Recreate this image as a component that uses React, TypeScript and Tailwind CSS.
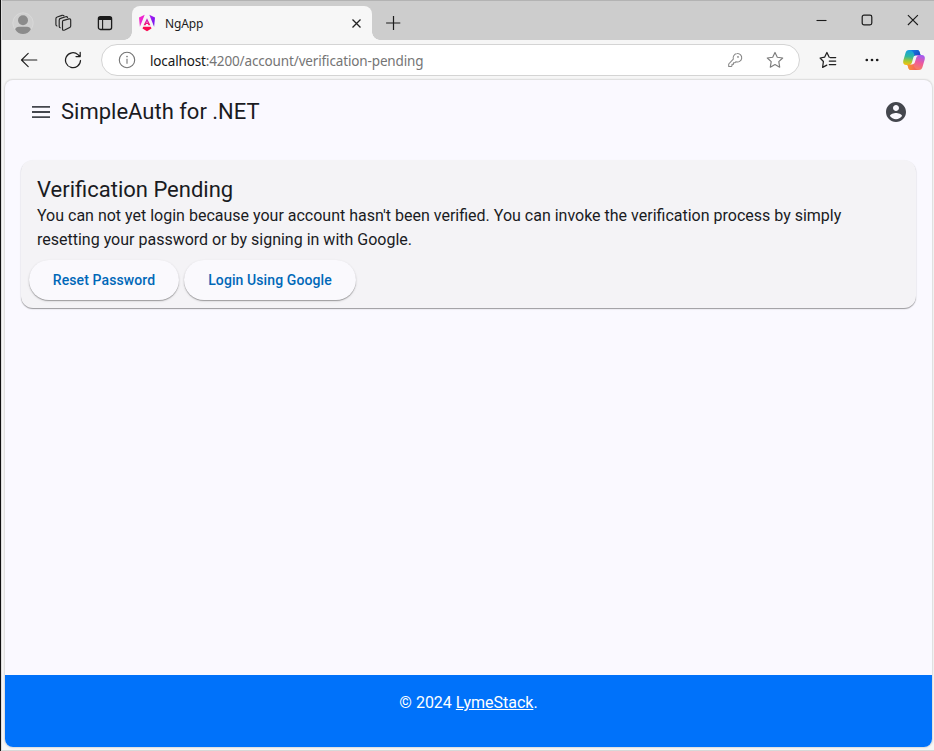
import React from "react";

function ProfileIcon() {
  return (
    <svg width="22" height="22" viewBox="0 0 22 22" className="ml-[10px] mt-3">
      <circle cx="11" cy="11" r="10.2" fill="#d0d0d0" stroke="#dadada" strokeWidth="0.8" />
      <circle cx="11" cy="8.3" r="5" fill="#8b8b8b" />
      <path d="M3.2 17.6C3.6 15.7 5 14.8 7 14.8h8c2 0 3.400.9 3.800 2.800C17 20.800 14 22 11 22s-6-1.200-7.800-4.400z" fill="#8b8b8b" />
    </svg>
  );
}

function WorkspacesIcon() {
  return (
    <svg width="18" height="18" viewBox="0 0 18 18" className="ml-[20px] mt-[14px]" fill="none" stroke="#262626" strokeWidth="1.150" strokeLinejoin="round" strokeLinecap="round">
      <path d="M8.900 6.600 14.900 4.900q1.800-.4 1.800 1.300v5.800q0 1.100-1 1.500l-5 2.500q-2.200.9-2.200-1.100V7.900q0-1 .4-1.300z" />
      <path d="M6.300 13.700Q5.200 13.700 5.200 12.300V6.300q0-1.500 1.400-1.900l5-1.600q1.500-.4 2 .6" />
      <path d="M2.900 12Q1.900 11.700 1.900 10.500V4.800q0-1.400 1.300-1.800L8 1.400q1.400-.4 2 .4" />
    </svg>
  );
}

function TabActionsIcon() {
  return (
    <svg width="16" height="16" viewBox="0 0 16 16" className="ml-[25px] mt-[15px]" fill="none" stroke="#1b1b1b" strokeWidth="1.300">
      <rect x="1.400" y="1.700" width="13.200" height="12.800" rx="2" />
      <path d="M1.400 3.500h13.200" strokeWidth="3" />
      <path d="M5.600 4v10.500" strokeWidth="1.100" />
    </svg>
  );
}

function AngularIcon() {
  return (
    <svg width="18" height="18" viewBox="0 0 18 18" className="shrink-0">
      <defs>
        <linearGradient id="ngA" x1="0" y1="0.200" x2="1" y2="0.700">
          <stop offset="0" stopColor="#f52cc4" />
          <stop offset="0.550" stopColor="#ee22d0" />
          <stop offset="1" stopColor="#e020e0" />
        </linearGradient>
        <linearGradient id="ngB" x1="0" y1="0" x2="1" y2="1">
          <stop offset="0" stopColor="#b01cf2" />
          <stop offset="1" stopColor="#6a14ee" />
        </linearGradient>
        <linearGradient id="ngC" x1="0" y1="0" x2="0" y2="1">
          <stop offset="0" stopColor="#c322e6" />
          <stop offset="1" stopColor="#fa1460" />
        </linearGradient>
      </defs>
      <path d="M6.700.800 1 3.500l.9 9.200z" fill="url(#ngA)" />
      <path d="M11.300.800 17 3.500l-.9 9.200z" fill="url(#ngB)" />
      <path d="M9 4.200 5.600 11.300h2l.5-1.200h1.800l.5 1.200h2zM9 7.200l.6 1.500H8.400z" fill="url(#ngC)" fillRule="evenodd" />
      <path d="M5.200 12.800h7.600l.7 1.700L9 17.200l-4.500-2.700z" fill="#fa0a52" />
    </svg>
  );
}

function CopilotIcon() {
  return (
    <svg width="24" height="22" viewBox="0 0 24 22" className="ml-[22px] shrink-0">
      <defs>
        <linearGradient id="cpL" x1="0.500" y1="0" x2="0.400" y2="1">
          <stop offset="0" stopColor="#159be8" />
          <stop offset="0.450" stopColor="#2fb8a0" />
          <stop offset="0.750" stopColor="#a6c833" />
          <stop offset="1" stopColor="#f3c20f" />
        </linearGradient>
        <linearGradient id="cpR" x1="0.700" y1="0" x2="0.300" y2="1">
          <stop offset="0" stopColor="#a45cf0" />
          <stop offset="0.450" stopColor="#ee5a9c" />
          <stop offset="1" stopColor="#fb8a4c" />
        </linearGradient>
        <linearGradient id="cpT" x1="0" y1="0" x2="1" y2="0.600">
          <stop offset="0" stopColor="#1686e4" />
          <stop offset="1" stopColor="#1a47c4" />
        </linearGradient>
        <linearGradient id="cpB" x1="0" y1="0" x2="1" y2="0">
          <stop offset="0" stopColor="#f8972e" />
          <stop offset="1" stopColor="#f2506a" />
        </linearGradient>
      </defs>
      <path d="M7 1h8.200c1.300 0 2 .8 2.400 2l1 3.200h-2.800c-1.500 0-2.300.8-2.800 2.200L10.500 16H4.400C1.800 16 .6 14 1.300 11.500L3.500 4C4.100 2 5 1 7 1z" fill="url(#cpL)" />
      <path d="M7.500 1h7.700c1.300 0 2 .8 2.400 2l1 3.200h-2.800c-1.500 0-2.300.8-2.800 2.200C12.500 5.500 11.500 1.600 7.500 1z" fill="url(#cpT)" />
      <path d="M17 21H8.800c-1.300 0-2-.8-2.400-2l-1-3.200h2.800c1.500 0 2.300-.8 2.800-2.200L13.500 6h6.100c2.600 0 3.800 2 3.100 4.500L20.500 18c-.6 2-1.500 3-3.500 3z" fill="url(#cpR)" />
      <path d="M16.500 21H8.800c-1.300 0-2-.8-2.400-2l-1-3.200h2.800c1.500 0 2.300-.8 2.800-2.200.5 2.900 1.500 6.800 5.500 7.400z" fill="url(#cpB)" />
      <path d="M13.300 6.800h3.300c-1.400.1-2 .9-2.400 2.200l-1.300 4.300c-.5 1.500-1.500 2.100-3 2.100H7.600c1.400-.1 2-.9 2.400-2.200l1.200-4.300c.4-1.400 1-2.100 2.100-2.100z" fill="#f6f4f6" />
    </svg>
  );
}

function TitleBar() {
  return (
    <div className="flex h-10 shrink-0 border-t border-[#b3b3b3] bg-[#cdcdcd]">
      <div className="-mt-px flex w-[130px] shrink-0">
        <ProfileIcon />
        <WorkspacesIcon />
        <TabActionsIcon />
      </div>
      <div className="relative mt-[5px] flex w-[240px] items-center rounded-t-[8px] bg-[#f7f7f7] pl-[6px] pr-[10px]">
        <div className="absolute -left-2 bottom-0 size-2 bg-[radial-gradient(circle_at_0_0,transparent_7.500px,#f7f7f7_8px)]" />
        <div className="absolute -right-2 bottom-0 size-2 bg-[radial-gradient(circle_at_100%_0,transparent_7.500px,#f7f7f7_8px)]" />
        <AngularIcon />
        <span className="ml-[9px] flex-1 pt-0.5 text-[12px] leading-4 tracking-[-0.150px] text-[#1c1c1c]">NgApp</span>
        <svg width="11" height="11" viewBox="0 0 11 11" stroke="#222" strokeWidth="1.300">
          <path d="m1.500 1.500 8 8m0-8-8 8" />
        </svg>
      </div>
      <svg width="16" height="16" viewBox="0 0 16 16" stroke="#1b1b1b" strokeWidth="1.200" className="ml-[13px] mt-[14px]">
        <path d="M1.100 8h14.200M8.500 1v14" />
      </svg>
      <div className="ml-auto flex pr-[15px] pt-[12px]">
        <svg width="14" height="14" viewBox="0 0 14 14" className="mr-[32px]" stroke="#1b1b1b" strokeWidth="1.100">
          <path d="M2.500 7.500h10" />
        </svg>
        <svg width="14" height="14" viewBox="0 0 14 14" className="mr-[32px]" fill="none" stroke="#1b1b1b" strokeWidth="1.200">
          <rect x="2.200" y="2.200" width="9.600" height="9.600" rx="1.800" />
        </svg>
        <svg width="13" height="14" viewBox="0 0 13 14" stroke="#1b1b1b" strokeWidth="1.100">
          <path d="m1.900 2.200 10 9.800m0-9.800-10 9.800" />
        </svg>
      </div>
    </div>
  );
}

function AddressBar() {
  return (
    <div className="flex h-10 shrink-0 items-center">
      <svg width="18" height="16" viewBox="0 0 18 16" className="ml-[18px]" fill="none" stroke="#202020" strokeWidth="1.150" strokeLinecap="round" strokeLinejoin="round">
        <path d="M16.800 8H1.500m6.700-6.700L1.500 8l6.700 6.700" />
      </svg>
      <svg width="18" height="18" viewBox="0 0 18 18" className="ml-[26px]" fill="none" stroke="#202020" strokeWidth="1.250" strokeLinecap="round" strokeLinejoin="round">
        <path d="M16.500 9.500A7.500 7.500 0 1 1 14 3.600l1.800 1.900M16.200 1.400v4.200H12" />
      </svg>
      <div className="ml-[19px] flex h-8 w-[699px] items-center rounded-full border border-[#d4d4d4] bg-white">
        <svg width="18" height="18" viewBox="0 0 18 18" className="ml-4" fill="none" stroke="#747474" strokeWidth="1.100">
          <circle cx="9" cy="9" r="7.700" />
          <path d="M9 7.800v4.900" />
          <circle cx="9" cy="5.600" r=".8" fill="#747474" stroke="none" />
        </svg>
        <span className="ml-[14px] flex-1 whitespace-nowrap pt-0.5 text-[13.500px] leading-5 tracking-[-0.140px] text-[#757575]">
          <span className="text-[#181818]">localhost</span>:4200/account/verification-pending
        </span>
        <svg width="16" height="16" viewBox="0 0 16 16" fill="none" stroke="#868686" strokeWidth="1.050" strokeLinejoin="round">
          <path d="M10.200 1.600a4.200 4.200 0 1 1-1.200 8.100L7.800 10.800H6.500v1.500H5v1.500l-.8.700H1.700V12l4.600-4.800A4.300 4.300 0 0 1 10.200 1.600z" />
          <circle cx="11" cy="4.900" r=".9" fill="#868686" stroke="none" />
        </svg>
        <svg width="18" height="18" viewBox="0 0 18 18" className="ml-[23px] mr-[15px]" fill="none" stroke="#7c7c7c" strokeWidth="1.150" strokeLinejoin="round">
          <path d="m9 1.400 2.300 4.900 5.400.7-3.900 3.700.9 5.500L9 13.600l-4.700 2.600.9-5.500L1.300 7l5.400-.7z" />
        </svg>
      </div>
      <svg width="18" height="18" viewBox="0 0 18 18" className="ml-[19px]" fill="none" stroke="#202020" strokeWidth="1.250" strokeLinejoin="round" strokeLinecap="round">
        <path d="M10.200 6.200 7.900 1.500 5.600 6.200l-4.500.8 3.300 3.500-.8 5.900 4.200-2.300M11.300 6.500h5.400M10.300 10h6.400M10.300 13.500h6.400" />
      </svg>
      <svg width="16" height="6" viewBox="0 0 16 6" className="ml-[27px]" fill="#1b1b1b">
        <circle cx="2.800" cy="3" r="1.350" />
        <circle cx="8" cy="3" r="1.350" />
        <circle cx="13.200" cy="3" r="1.350" />
      </svg>
      <CopilotIcon />
    </div>
  );
}

function PillButton({ children, className }: { children: React.ReactNode; className: string }) {
  return (
    <button
      className={
        "flex h-10 items-center justify-center rounded-full bg-[#faf9fd] text-[14px] font-medium tracking-[0.100px] text-[#0068b8] shadow-[0_1px_1px_0_rgba(0,0,0,0.300),0_1px_3px_0_rgba(0,0,0,0.110)] " +
        className
      }
    >
      {children}
    </button>
  );
}

function Page() {
  return (
    <div className="ml-[3px] mr-[2px] flex h-[667px] flex-col overflow-hidden rounded-[8px] bg-[#faf9ff] font-['Roboto','Liberation_Sans',sans-serif] text-[#1a1b1f] shadow-[0_0_1.500px_0.500px_rgba(0,0,0,0.110)]">
      <header className="flex h-16 shrink-0 items-center pl-[27px] pr-[25px]">
        <svg width="18" height="12" viewBox="0 0 18 12" fill="#44474e">
          <path d="M0 0h18v1.800H0zM0 5.100h18v1.800H0zM0 10.200h18V12H0z" />
        </svg>
        <h1 className="ml-[11px] flex-1 text-[22px] leading-7">SimpleAuth for .NET</h1>
        <svg width="22" height="22" viewBox="1 1 22 22" fill="#44474e">
          <path d="M12 2C6.480 2 2 6.480 2 12s4.480 10 10 10 10-4.480 10-10S17.520 2 12 2zm0 3c1.660 0 3 1.340 3 3s-1.340 3-3 3-3-1.340-3-3 1.340-3 3-3zm0 14.200c-2.500 0-4.710-1.280-6-3.220.03-1.990 4-3.080 6-3.080 1.990 0 5.970 1.090 6 3.080-1.290 1.940-3.500 3.220-6 3.220z" />
        </svg>
      </header>
      <main className="flex-1 px-4 pt-4">
        <section className="flex h-[148px] flex-col rounded-[12px] bg-[#f4f3f6] shadow-[0_1px_1px_0_rgba(0,0,0,0.340),0_1px_2px_0_rgba(0,0,0,0.080)]">
          <div className="px-4 pt-4">
            <h2 className="text-[22px] leading-7">Verification Pending</h2>
            <p className="w-[840px] text-[16px] leading-6">
              You can not yet login because your account hasn't been verified. You can invoke the verification process by simply
              <br />
              resetting your password or by signing in with Google.
            </p>
          </div>
          <div className="mt-2 flex gap-[5px] pl-2">
            <PillButton className="w-[150px]">Reset Password</PillButton>
            <PillButton className="w-[172px]">Login Using Google</PillButton>
          </div>
        </section>
      </main>
      <footer className="h-[72px] shrink-0 bg-[#0072fa] pt-4 text-center text-[16px] leading-6 text-white">
        © 2024 <a className="underline">LymeStack</a>.
      </footer>
    </div>
  );
}

export default function App() {
  return (
    <div className="flex h-[751px] w-[934px] overflow-hidden bg-[#f6f6f6] font-['Noto_Sans','Open_Sans',sans-serif]">
      <div className="w-px shrink-0 bg-[#111]" />
      <div className="flex min-w-0 flex-1 flex-col border-b border-l border-b-[#d8d8d8] border-l-[#dedede]">
        <TitleBar />
        <AddressBar />
        <Page />
      </div>
    </div>
  );
}
